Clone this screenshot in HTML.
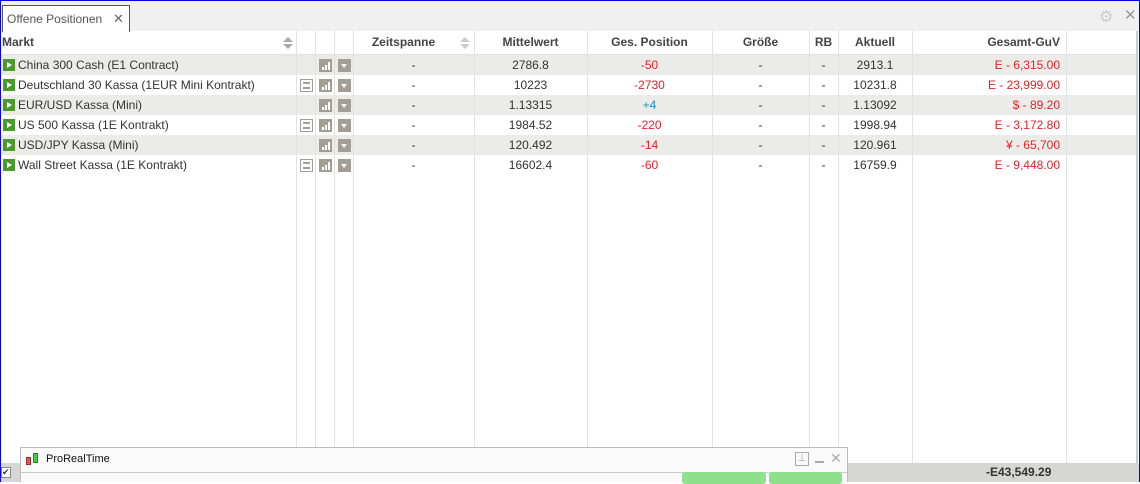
<!DOCTYPE html>
<html><head><meta charset="utf-8"><style>
*{margin:0;padding:0;box-sizing:border-box}
body{width:1140px;height:482px;overflow:hidden;background:#fff;font-family:"Liberation Sans",Arial,sans-serif;font-size:12px;color:#333;position:relative}
.frame{position:absolute;left:0;top:0;width:1140px;height:482px;border:1px solid #0000ee;border-bottom:none}
.tabbar{position:absolute;left:1px;top:1px;width:1138px;height:30px;background:#f0f0f0}
.tab{position:absolute;left:1px;top:4px;width:128px;height:27px;background:#fff;border:1px solid #555;border-bottom:none;padding:6px 0 0 4px;color:#555}
.tab span{position:absolute;left:110px;top:5px;color:#666;font-size:13px}
.vl{position:absolute;top:31px;height:432px;width:1px;background:#e2e2e2}
.hdr{position:absolute;top:31px;height:24px;left:1px;width:1135px;border-bottom:1px solid #e2e2e2}
.c{position:absolute;height:20px;line-height:20px;white-space:nowrap}
.h{position:absolute;top:33px;font-weight:bold;color:#444;line-height:18px}
.row{position:absolute;left:1px;width:1135px;height:20px}
.g{background:#ebebe7}
.red{color:#e8202a}.blue{color:#1a8fe0}
.gi{position:absolute;left:2px;top:4px;width:12px;height:12px;background:#4a9a2c}
.gi:after{content:"";position:absolute;left:4px;top:3px;border-left:5px solid #fff;border-top:3px solid transparent;border-bottom:3px solid transparent}
.ic{position:absolute;top:4px;width:13px;height:13px;background:#a29e96}
.dd:after{content:"";position:absolute;left:3px;top:5px;border-top:4px solid #fff;border-left:3.5px solid transparent;border-right:3.5px solid transparent}
.sort{position:absolute;width:0;height:0;border-left:5px solid transparent;border-right:5px solid transparent}
</style></head><body>
<div class="tabbar"><div class="tab">Offene Positionen<span>✕</span></div>
<div style="position:absolute;left:1098px;top:6px;color:#ccc;font-size:16px">⚙</div>
<div style="position:absolute;left:1123px;top:5px;color:#999;font-size:15px">✕</div></div>
<div class="hdr"></div>
<div class="h" style="left:2px">Markt</div>
<div class="sort" style="left:283px;top:37px;border-bottom:5px solid #aaa"></div>
<div class="sort" style="left:283px;top:44px;border-top:5px solid #aaa"></div>
<div class="h" style="left:353px;width:121px;text-align:center;padding-right:20px">Zeitspanne</div>
<div class="sort" style="left:460px;top:37px;border-bottom:5px solid #ccc"></div>
<div class="sort" style="left:460px;top:44px;border-top:5px solid #ccc"></div>
<div class="h" style="left:474px;width:113px;text-align:center">Mittelwert</div>
<div class="h" style="left:587px;width:125px;text-align:center">Ges. Position</div>
<div class="h" style="left:712px;width:97px;text-align:center">Größe</div>
<div class="h" style="left:809px;width:29px;text-align:center">RB</div>
<div class="h" style="left:838px;width:74px;text-align:center">Aktuell</div>
<div class="h" style="left:912px;width:154px;text-align:right;padding-right:6px">Gesamt-GuV</div>

<div id="rows"></div>
<script>
var d=[["China 300 Cash (E1 Contract)",0,"2786.8","-50","red","2913.1","E - 6,315.00"],
["Deutschland 30 Kassa (1EUR Mini Kontrakt)",1,"10223","-2730","red","10231.8","E - 23,999.00"],
["EUR/USD Kassa (Mini)",0,"1.13315","+4","blue","1.13092","$ - 89.20"],
["US 500 Kassa (1E Kontrakt)",1,"1984.52","-220","red","1998.94","E - 3,172.80"],
["USD/JPY Kassa (Mini)",0,"120.492","-14","red","120.961","¥ - 65,700"],
["Wall Street Kassa (1E Kontrakt)",1,"16602.4","-60","red","16759.9","E - 9,448.00"]];
var h="";
d.forEach(function(r,i){
h+='<div class="row'+(i%2==0?' g':'')+'" style="top:'+(55+i*20)+'px"><div class="gi"></div>'+
'<div class="c" style="left:17px">'+r[0]+'</div>'+
(r[1]?'<div class="ic" style="left:299px;background:#fff;border:1px solid #a29e96"><div style="position:absolute;left:2px;top:2px;width:7px;height:7px;border-top:2px solid #a29e96;border-bottom:2px solid #a29e96"></div></div>':'')+
'<div class="ic" style="left:318px"><div style="position:absolute;left:3px;top:8px;width:2px;height:3px;background:#fff"></div><div style="position:absolute;left:6px;top:6px;width:2px;height:5px;background:#fff"></div><div style="position:absolute;left:9px;top:3px;width:2px;height:8px;background:#fff"></div></div>'+
'<div class="ic dd" style="left:337px"></div>'+
'<div class="c" style="left:352px;width:121px;text-align:center">-</div>'+
'<div class="c" style="left:473px;width:113px;text-align:center">'+r[2]+'</div>'+
'<div class="c '+r[4]+'" style="left:586px;width:125px;text-align:center">'+r[3]+'</div>'+
'<div class="c" style="left:711px;width:97px;text-align:center">-</div>'+
'<div class="c" style="left:808px;width:29px;text-align:center">-</div>'+
'<div class="c" style="left:837px;width:74px;text-align:center">'+r[5]+'</div>'+
'<div class="c red" style="left:911px;width:154px;text-align:right;padding-right:6px">'+r[6]+'</div></div>';});
[296,315,334,353,474,587,712,809,838,912,1066].forEach(function(x){h+='<div class="vl" style="left:'+x+'px"></div>'});
document.getElementById("rows").innerHTML=h;
</script>
<div style="position:absolute;left:1136px;top:31px;width:2px;height:432px;background:#ccc"></div>
<div style="position:absolute;left:1px;top:463px;width:1138px;height:19px;background:#d6d6d2"></div>
<div style="position:absolute;left:1px;top:467px;width:10px;height:11px;background:#fff;border:1px solid #888;font-size:9px;line-height:9px">✔</div>
<div style="position:absolute;left:986px;top:465px;font-weight:bold;color:#333">-E43,549.29</div>
<div style="position:absolute;left:20px;top:447px;width:828px;height:35px;background:#fafafa;border:1px solid #bbb;border-bottom:none">
<div style="position:absolute;left:5px;top:9px;width:5px;height:8px;background:#d55;border:1px solid #933"></div>
<div style="position:absolute;left:12px;top:5px;width:5px;height:10px;background:#4c4;border:1px solid #282"></div>
<div style="position:absolute;left:25px;top:5px;font-size:11px;color:#111">ProRealTime</div>
<div style="position:absolute;left:774px;top:4px;width:14px;height:14px;border:1px solid #aaa;color:#aaa;font-size:10px;text-align:center;line-height:12px">⊥</div>
<div style="position:absolute;left:794px;top:13px;width:9px;height:2px;background:#aaa"></div>
<div style="position:absolute;left:809px;top:2px;color:#aaa;font-size:14px">✕</div>
<div style="position:absolute;left:0;top:24px;width:826px;height:1px;background:#ccc"></div>
<div style="position:absolute;left:661px;top:24px;width:84px;height:12px;background:#8ee08a;border-radius:3px"></div>
<div style="position:absolute;left:748px;top:24px;width:73px;height:12px;background:#8ee08a;border-radius:3px"></div>
</div>
<div class="frame"></div>
</body></html>
